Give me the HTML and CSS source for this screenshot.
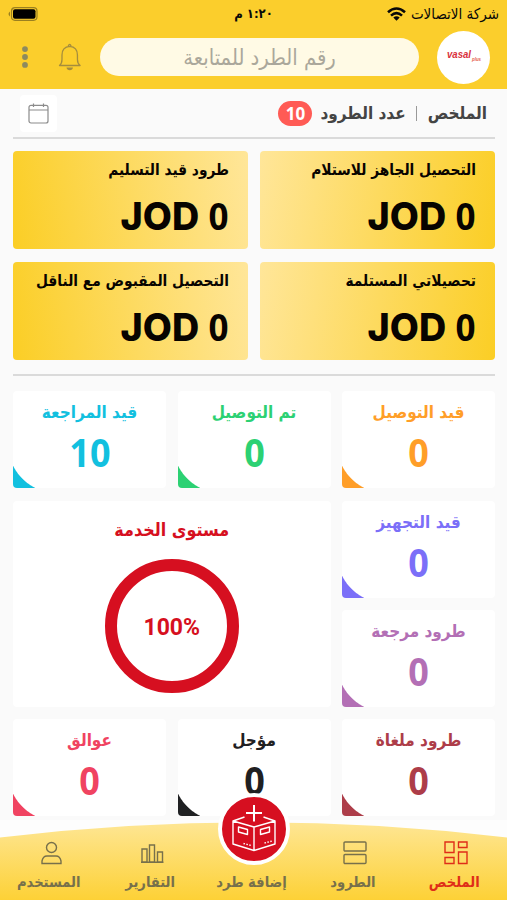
FILE: index.html
```html
<!DOCTYPE html>
<html lang="ar" dir="rtl">
<head>
<meta charset="utf-8">
<title>الملخص</title>
<link rel="stylesheet" href="styles.css">
</head>
<body>
<header class="header">
  <div class="status">
    <div class="carrier"><span>شركة الاتصالات</span>
      <svg class="wifi" width="19" height="14" viewBox="0 0 19 14"><g fill="none" stroke="#080808" stroke-width="2.6"><path d="M1 5.2Q9.5-2.2 18 5.2"/><path d="M4 8.6Q9.500 3.700 15 8.600"/></g><path d="M6.300 10.500Q9.500 7.800 12.700 10.500L9.500 13.800Z" fill="#080808"/></svg>
    </div>
    <div class="time">١:٢٠ م</div>
    <svg class="battery" width="30" height="14" viewBox="0 0 30 14"><rect x="3.500" y=".7" width="25.500" height="12.600" rx="3.500" fill="none" stroke="#9b8020" stroke-width="1.200"/><rect x="5" y="2.300" width="22.500" height="9.500" rx="2" fill="#000"/><path d="M2 4.500Q-1 7 2 9.500Z" fill="#9b8020"/></svg>
  </div>
  <div class="toolbar">
    <div class="logo"><svg width="40" height="24" viewBox="0 0 40 24"><text x="3" y="13" class="logo-main" textLength="24" lengthAdjust="spacingAndGlyphs">vasal</text><text x="28" y="16" class="logo-sub" textLength="9" lengthAdjust="spacingAndGlyphs">plus</text></svg></div>
    <div class="search"><span>رقم الطرد للمتابعة</span></div>
    <svg class="bell" width="24" height="28" viewBox="0 0 24 28"><path d="M1.500 22.500Q4 20.500 4 16.500V12Q4 4 11.700 3.300Q19.500 4 19.500 12V16.500Q19.500 20.500 22.200 22.500ZM10.200 3.200Q11.700-.5 13.200 3.200" fill="none" stroke="#a58d3d" stroke-width="1.300" stroke-linejoin="round"/><path d="M8.500 24.500H15Q14.500 27.200 11.800 27.200Q9 27.200 8.500 24.500Z" fill="#a58d3d"/></svg>
    <svg class="more" width="6" height="24" viewBox="0 0 6 24" fill="#8d8a5f"><circle cx="3" cy="4" r="2.900"/><circle cx="3" cy="12" r="2.900"/><circle cx="3" cy="20" r="2.900"/></svg>
  </div>
</header>
<main class="content">
  <section class="summary">
    <span class="t-title">الملخص</span><i class="bar"></i><span class="t-count">عدد الطرود</span><b class="badge">10</b>
    <div class="calendar"><svg width="21" height="21" viewBox="0 0 21 21" fill="none" stroke="#8c8c8c" stroke-width="1.200"><rect x="1" y="2.300" width="19" height="17.700" rx="2"/><path d="M1 7H20M5.500 .5V4M15.500 .5V4"/></svg></div>
  </section>
  <section class="money">
    <article class="cash"><h2>التحصيل الجاهز للاستلام</h2><p dir="ltr">JOD <span>0</span></p></article>
    <article class="cash rev"><h2>طرود قيد التسليم</h2><p dir="ltr">JOD <span>0</span></p></article>
    <article class="cash"><h2>تحصيلاتي المستلمة</h2><p dir="ltr">JOD <span>0</span></p></article>
    <article class="cash rev"><h2>التحصيل المقبوض مع الناقل</h2><p dir="ltr">JOD <span>0</span></p></article>
  </section>
  <section class="stats">
    <article class="stat orange"><h3>قيد التوصيل</h3><p>0</p></article>
    <article class="stat green"><h3>تم التوصيل</h3><p>0</p></article>
    <article class="stat cyan"><h3>قيد المراجعة</h3><p>10</p></article>
    <div class="pair">
      <article class="stat violet"><h3>قيد التجهيز</h3><p>0</p></article>
      <article class="stat mauve"><h3>طرود مرجعة</h3><p>0</p></article>
    </div>
    <article class="service"><h3>مستوى الخدمة</h3><div class="ring" dir="ltr">100%</div></article>
    <article class="stat brick"><h3>طرود ملغاة</h3><p>0</p></article>
    <article class="stat black"><h3>مؤجل</h3><p>0</p></article>
    <article class="stat rose"><h3>عوالق</h3><p>0</p></article>
  </section>
</main>
<nav class="nav">
  <svg class="nav-bg" width="507" height="80" viewBox="0 0 507 80"><defs><linearGradient id="g" x1="0" y1="0" x2="0" y2="1"><stop offset="0" stop-color="#fee694"/><stop offset="1" stop-color="#fdd136"/></linearGradient></defs><path d="M0 0H507V80H0Z" fill="#fff" opacity=".65"/><path d="M0 17.500Q254-13 507 17.500V80H0Z" fill="url(#g)"/></svg>
  <a class="item active"><svg width="26" height="26" viewBox="0 0 26 26"><path d="M2 2H11V12.500H2ZM15.500 2H24V7.500H15.500ZM2 17.500H11V23.500H2ZM15.500 12H24V23.500H15.500Z"/></svg><span>الملخص</span></a>
  <a class="item"><svg width="26" height="26" viewBox="0 0 26 26"><rect x="2" y="2" width="22" height="9" rx="1"/><rect x="2" y="14.500" width="22" height="9" rx="1"/></svg><span>الطرود</span></a>
  <a class="item add"><span>إضافة طرد</span></a>
  <a class="item"><svg width="26" height="26" viewBox="0 0 26 26"><path d="M3 9H8V22H3ZM10.500 5H15.500V22H10.500ZM18.500 12H23.500V22H18.500ZM2 22.200H24.500"/></svg><span>التقارير</span></a>
  <a class="item"><svg width="26" height="26" viewBox="0 0 26 26"><circle cx="13.500" cy="7.500" r="5"/><path d="M4 23.500V21Q5 16 9 16H18Q22 16 23 21V23.500Z"/></svg><span>المستخدم</span></a>
  <div class="fab"><svg width="46" height="48" viewBox="0 0 46 48" fill="none" stroke="#fff" stroke-width="1.400" stroke-linejoin="round"><path d="M23 0V16.500M15 8H31" stroke-width="2"/><path d="M13.500 12L2 16L23 22L44 16L32.500 12M2 16V39L23 45.500V22M44 16V39L23 45.500M7.500 22L16.500 24.500V29.500L7.500 27ZM38.500 22L29.500 24.500V29.500L38.500 27Z"/><path d="M12.500 38.500L20 40.500M33.500 38L41 36" stroke-dasharray="1.500 1.500"/></svg></div>
</nav>
</body>
</html>
```
FILE: styles.css
```css
* { box-sizing: border-box; margin: 0; padding: 0; }
body { width: 507px; height: 900px; overflow: hidden; position: relative; background: #fafafa; font-family: "DejaVu Sans Condensed", "DejaVu Sans", sans-serif; font-stretch: semi-condensed; }
span, h2, h3 { white-space: nowrap; }
.header { height: 89px; background: #fbce2c; }
.status { height: 27px; display: grid; grid-template-columns: 1fr auto 1fr; align-items: center; padding: 0 8px; color: #080808; font-size: 15px; }
.carrier { display: flex; align-items: center; gap: 5px; }
.time { font-weight: bold; font-size: 13px; }
.battery { justify-self: end; }
.toolbar { height: 60px; display: flex; align-items: center; padding: 0 17px 0 22px; }
.logo { width: 53px; height: 53px; border-radius: 50%; background: #fff; display: grid; place-items: center; direction: ltr; }
.logo-main { font: italic bold 10px "Liberation Sans", sans-serif; fill: #d9303a; }
.logo-sub { font: italic bold 5px "Liberation Sans", sans-serif; fill: #e5604e; }
.search { width: 320px; height: 38px; margin-right: 18px; border-radius: 19px; background: #fffae5; color: #aaa79b; display: grid; place-items: center; font-size: 21.800px; }
.bell { margin-right: 18px; }
.more { margin-right: 30px; }
.summary { height: 50px; margin: 0 12px 0 13px; border-bottom: 2px solid #dadada; display: flex; align-items: center; padding-right: 8px; color: #444; font-size: 17px; font-weight: bold; }
.bar { width: 1px; height: 15px; margin: 0 11px 0 10px; background: #999; }
.badge { width: 34px; height: 25px; margin-right: 8px; border-radius: 13px; background: #ff5b55; color: #fff; display: grid; place-items: center; font: bold 17px "Noto Sans", sans-serif; }
.calendar { width: 37px; height: 37px; margin: 0 auto 0 7px; background: #fff; display: grid; place-items: center; border-radius: 4px; }
.money { margin: 0 12px 0 13px; height: 237px; padding-top: 12px; border-bottom: 2px solid #dadada; display: grid; grid-template-columns: 235px 235px; grid-auto-rows: 98px; gap: 12.500px 12px; }
.cash { border-radius: 4px; background: linear-gradient(100deg, #ffe699, #fbce25); padding: 8px 19px; color: #080400; }
.cash.rev { background: linear-gradient(80deg, #fbce25, #ffe699); }
.cash h2 { font-size: 15.300px; line-height: 22px; }
.cash p { font: 800 37.700px/48px Inter, sans-serif; text-align: right; margin-top: 11px; }
.cash p span, .stat p { font-family: "Noto Sans", sans-serif; font-weight: bold; }
.cash p span { display: inline-block; line-height: 48px; transform: scaleX(.93); transform-origin: right; }
.stats { margin: 15px 12px 0 13px; display: grid; grid-template-columns: 153px 153px 153px; grid-template-rows: 97px 206px 97px; gap: 12.500px 11.500px; }
.stat { height: 97px; background: #fff; border-radius: 4px; text-align: center; overflow: hidden; color: var(--c); display: grid; grid-template-rows: 42px 38px 1fr; justify-items: center; position: relative; }
.stat h3, .service h3 { font-size: 17px; line-height: 42px; }
.service h3 { font-size: 17.800px; }
.stat p { font-size: 40px; line-height: 38px; transform: scaleX(.9); }
.stat::after { content: ""; position: absolute; left: 0; bottom: 0; width: 22px; height: 22px; background: radial-gradient(circle at 44px -22px, transparent 48.500px, var(--c) 49.500px); }
.orange { --c: #ff9e28; } .green { --c: #2cd173; } .cyan { --c: #12c0df; }
.violet { --c: #7b6ff8; } .mauve { --c: #b36fb5; } .brick { --c: #ad3d49; } .black { --c: #1f2022; } .rose { --c: #f04361; }
.pair { display: flex; flex-direction: column; justify-content: space-between; }
.service { grid-column: span 2; background: #fff; border-radius: 4px; color: #d60f20; display: flex; flex-direction: column; align-items: center; padding-top: 8px; }
.ring { width: 134px; height: 134px; border: 12px solid #d60f20; border-radius: 50%; margin-top: 8px; display: grid; place-items: center; font: bold 23px Roboto, sans-serif; padding-top: 3px; }
.nav { position: absolute; left: 0; bottom: 0; width: 507px; height: 80px; display: grid; grid-template-columns: repeat(5, 101.400px); }
.nav-bg { position: absolute; left: 0; top: 0; }
.item { position: relative; display: flex; flex-direction: column; align-items: center; padding-top: 20px; color: #77704b; font-size: 14.600px; font-weight: bold; }
.item svg { fill: none; stroke: currentColor; stroke-width: 1.400; }
.item span { line-height: 20px; margin: 6px 4px 0 0; }
.item.add { padding-top: 46px; }
.item.active { color: #df2d18; }
.fab { position: absolute; left: 218px; top: -27px; width: 72px; height: 72px; border: 4px solid #fff; border-radius: 50%; background: #d60f20; display: grid; place-items: center; }
```
